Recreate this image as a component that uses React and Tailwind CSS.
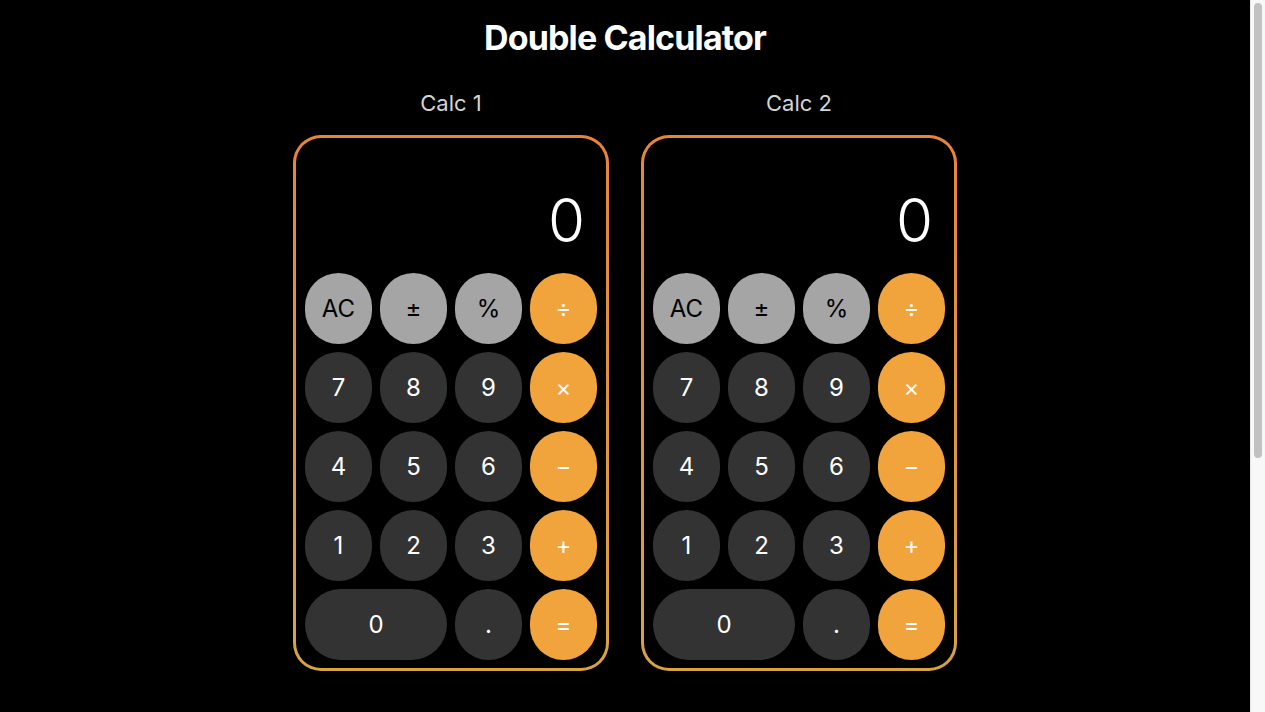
import React, { useState } from "react";

const KEYS = [
  { k: "AC", t: "fn" },
  { k: "±", t: "fn" },
  { k: "%", t: "fn" },
  { k: "÷", t: "op" },
  { k: "7" }, { k: "8" }, { k: "9" }, { k: "×", t: "op" },
  { k: "4" }, { k: "5" }, { k: "6" }, { k: "−", t: "op" },
  { k: "1" }, { k: "2" }, { k: "3" }, { k: "+", t: "op" },
  { k: "0", wide: true }, { k: "." }, { k: "=", t: "op" },
];

function Calculator({ title }) {
  const [display, setDisplay] = useState("0");

  const press = (k) => {
    if (k === "AC") return setDisplay("0");
    if (/[0-9]/.test(k)) setDisplay((d) => (d === "0" ? k : d + k));
  };

  return (
    <div className="flex flex-col items-center gap-[18px]">
      <h2 className="text-[22px] leading-[28px] text-neutral-300">{title}</h2>
      <div className="w-[316px] rounded-[28px] bg-linear-to-b from-[#e8843c] to-[#d8a342] p-[3px]">
        <div className="rounded-[25px] bg-black p-[9px] pb-[8px]">
          <div className="h-[118px] flex items-end justify-end pr-[12px] pb-[15px]">
            <span className="text-[60px] leading-none font-light text-white">
              {display}
            </span>
          </div>
          <div className="mt-2 grid grid-cols-4 gap-2">
            {KEYS.map(({ k, t, wide }) => (
              <button
                key={k}
                onClick={() => press(k)}
                className={
                  "h-[71px] rounded-full text-2xl flex items-center justify-center " +
                  (wide ? "col-span-2 " : "") +
                  (t === "fn"
                    ? "bg-[#a5a5a5] text-black"
                    : t === "op"
                    ? "bg-[#f1a33c] text-white"
                    : "bg-[#333333] text-white")
                }
              >
                {k}
              </button>
            ))}
          </div>
        </div>
      </div>
    </div>
  );
}

export default function App() {
  return (
    <div
      className="flex h-screen overflow-hidden bg-black"
      style={{ fontFamily: "Inter, 'Noto Sans', sans-serif" }}
    >
      <main className="flex-1 flex flex-col items-center pt-[18px]">
        <h1 className="text-[34px] leading-[40px] font-bold tracking-tight text-white">
          Double Calculator
        </h1>
        <div className="mt-[31px] flex gap-8">
          <Calculator title="Calc 1" />
          <Calculator title="Calc 2" />
        </div>
      </main>
      {/* scrollbar */}
      <div className="w-[15px] shrink-0 bg-[#f8f8f8] border-l border-[#e6e6e6] px-[3px] pt-[3px]">
        <div className="h-[455px] rounded-full bg-[#c1c1c1]" />
      </div>
    </div>
  );
}
